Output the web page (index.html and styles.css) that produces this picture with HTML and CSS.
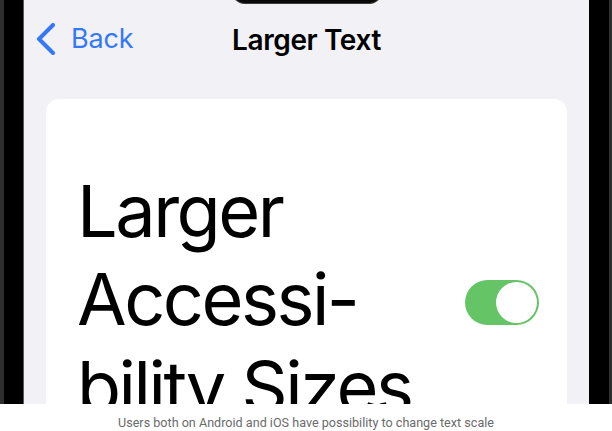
FILE: index.html
```html
<!DOCTYPE html>
<html>
<head>
<meta charset="utf-8">
<link rel="stylesheet" href="styles.css">
</head>
<body>
<div class="frame">
  <div class="bezel">
    <div class="screen">
      <div class="island"></div>
      <div class="nav">
        <div class="back">
          <svg class="chev" width="20" height="32" viewBox="0 0 20 32"><polyline points="17,2 3,16 17,30" fill="none" stroke="#3478f6" stroke-width="4" stroke-linecap="round" stroke-linejoin="round"/></svg>
          <span>Back</span>
        </div>
        <div class="title">Larger Text</div>
      </div>
      <div class="card">
        <div class="big">Larger<br>Accessi-<br>bility Sizes</div>
        <div class="toggle"><div class="knob"></div></div>
      </div>
    </div>
  </div>
</div>
<div class="caption">Users both on Android and iOS have possibility to change text scale</div>
</body>
</html>
```
FILE: styles.css
```css
html, body {
  margin: 0;
  padding: 0;
  background: #ffffff;
}
.frame {
  height: 404px;
  background: #2e2e2e;
  padding: 0 3px 0 4px;
  display: flex;
  overflow: hidden;
}
.bezel {
  flex: 1;
  background: #000;
  padding: 0 20px 0 19px;
  display: flex;
}
.screen {
  flex: 1;
  position: relative;
  background: #f1f1f6;
  border-left: 1px solid #5a5a5e;
  overflow: hidden;
  font-family: Inter, "Noto Sans", sans-serif;
}
.island {
  position: absolute;
  left: 209px;
  top: -20px;
  width: 148px;
  height: 23px;
  background: #0a0a0a;
  border-radius: 12px;
  box-shadow: 0 0 0 1px #3a3a3a;
}
.nav {
  height: 80px;
  position: relative;
  display: flex;
  align-items: center;
  justify-content: center;
}
.back {
  position: absolute;
  left: 12px;
  top: 22px;
  display: flex;
  align-items: center;
  gap: 15px;
  color: #3478f6;
  font-size: 27px;
  letter-spacing: -0.2px;
}
.chev { display: block; }
.title {
  font-size: 28px;
  font-weight: 600;
  color: #000;
  letter-spacing: -0.4px;
  margin-bottom: 1px;
}
.card {
  margin: 19px 22px 0 22px;
  background: #fff;
  border-radius: 13px;
  padding: 68px 28px 0 31px;
  display: flex;
  justify-content: space-between;
  align-items: flex-start;
  height: 400px;
}
.big {
  font-size: 72px;
  line-height: 88px;
  height: 237px;
  overflow: hidden;
  color: #000;
  letter-spacing: -2.5px;
}
.toggle {
  margin-top: 113px;
  width: 74px;
  height: 45px;
  border-radius: 23px;
  background: #65c466;
  display: flex;
  justify-content: flex-end;
  align-items: center;
  padding: 0 2px;
  box-sizing: border-box;
}
.knob {
  width: 41px;
  height: 41px;
  border-radius: 50%;
  background: #fff;
}
.caption {
  height: 27px;
  box-sizing: border-box;
  padding-top: 9px;
  display: flex;
  align-items: center;
  justify-content: center;
  font-family: Roboto, "Noto Sans", sans-serif;
  font-size: 12.6px;
  color: #6b6b6b;
}
```
